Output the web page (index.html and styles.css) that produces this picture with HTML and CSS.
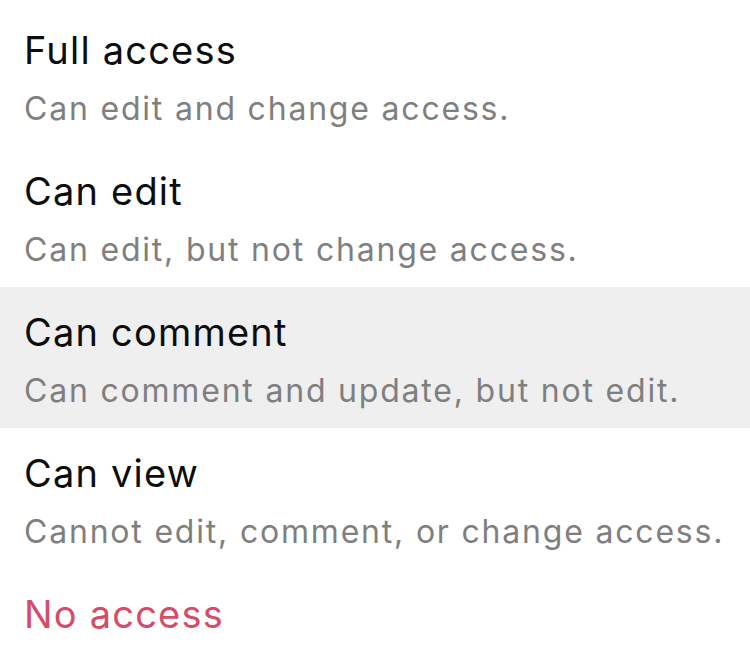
FILE: index.html
```html
<!DOCTYPE html>
<html lang="en">
<head>
<meta charset="utf-8">
<title>Access menu</title>
<link rel="stylesheet" href="styles.css">
</head>
<body>
<div class="menu">
  <div class="item">
    <div class="title">Full access</div>
    <div class="desc">Can edit and change access.</div>
  </div>
  <div class="item">
    <div class="title">Can edit</div>
    <div class="desc">Can edit, but not change access.</div>
  </div>
  <div class="item item-active">
    <div class="title">Can comment</div>
    <div class="desc">Can comment and update, but not edit.</div>
  </div>
  <div class="item">
    <div class="title">Can view</div>
    <div class="desc">Cannot edit, comment, or change access.</div>
  </div>
  <div class="item item-single">
    <div class="title title-danger">No access</div>
  </div>
</div>
</body>
</html>
```
FILE: styles.css
```css
html, body {
  margin: 0;
  padding: 0;
  background: #ffffff;
}
body {
  font-family: Inter, "Noto Sans", "Liberation Sans", sans-serif;
  width: 750px;
  height: 666px;
  overflow: hidden;
}
.menu {
  display: flex;
  flex-direction: column;
  padding-top: 5px;
}
.item {
  height: 141px;
  box-sizing: border-box;
  padding: 22px 24px 0;
  display: flex;
  flex-direction: column;
  flex-shrink: 0;
}
.item-single {
  height: 92px;
}
.item-active {
  background: #efefef;
}
.title {
  font-size: 38px;
  line-height: 46px;
  letter-spacing: 1.2px;
  color: #0d0d0d;
  white-space: nowrap;
}
.title-danger {
  color: #d44c68;
}
.desc {
  margin-top: 16px;
  font-size: 32px;
  line-height: 40px;
  letter-spacing: 1.8px;
  color: #7f7f7f;
  white-space: nowrap;
}
```
